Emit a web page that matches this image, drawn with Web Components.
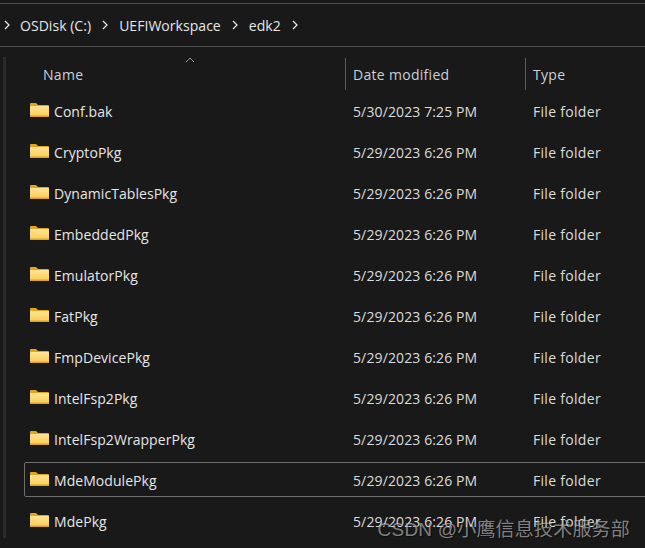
<!DOCTYPE html>
<html>
<head>
<meta charset="utf-8">
<style>
    html, body { margin: 0; height: 100%; overflow: hidden; background: #191919; }
    body { font-family: "Open Sans", "Noto Sans", sans-serif; color: #d6d6d6; }
</style>
</head>
<body>
<explorer-window>
    <path-bar slot="bar">
        <path-crumb>OSDisk (C:)</path-crumb>
        <path-crumb>UEFIWorkspace</path-crumb>
        <path-crumb>edk2</path-crumb>
    </path-bar>
    <list-header slot="header"></list-header>
    <folder-row name="Conf.bak" date="5/30/2023 7:25 PM"></folder-row>
    <folder-row name="CryptoPkg"></folder-row>
    <folder-row name="DynamicTablesPkg"></folder-row>
    <folder-row name="EmbeddedPkg"></folder-row>
    <folder-row name="EmulatorPkg"></folder-row>
    <folder-row name="FatPkg"></folder-row>
    <folder-row name="FmpDevicePkg"></folder-row>
    <folder-row name="IntelFsp2Pkg"></folder-row>
    <folder-row name="IntelFsp2WrapperPkg"></folder-row>
    <folder-row name="MdeModulePkg" focused></folder-row>
    <folder-row name="MdePkg"></folder-row>
</explorer-window>
<water-mark>CSDN @小鹰信息技术服务部</water-mark>

<script>
const chevron = `<svg width="6" height="10" viewBox="0 0 6 10"><path d="M1 1l4 4-4 4" fill="none" stroke="#e4e4e4" stroke-width="1.3"/></svg>`;

class ExplorerWindow extends HTMLElement {
    connectedCallback() {
        this.attachShadow({ mode: 'open' });
        this.shadowRoot.innerHTML = `
            <style>
                :host { display: block; width: 645px; height: 548px; overflow: hidden; padding-top: 3px; box-sizing: border-box; }
                .bar { border-top: 1px solid #4d4d4d; border-bottom: 1px solid #4d4d4d; height: 42px; }
                .body { display: flex; }
                .rail { width: 3px; margin: 10px 0 0 3px; background: #2b2b2b; }
                .list { flex: 1; min-width: 0; margin-left: 18px; display: flex; flex-direction: column; gap: 6px; }
            </style>
            <div class="bar"><slot name="bar"></slot></div>
            <div class="body">
                <div class="rail"></div>
                <div class="list">
                    <slot name="header"></slot>
                    <slot></slot>
                </div>
            </div>
        `;
    }
}

class PathBar extends HTMLElement {
    connectedCallback() {
        this.attachShadow({ mode: 'open' });
        this.shadowRoot.innerHTML = `
            <style>
                :host { display: flex; align-items: center; height: 100%; padding-left: 4px; gap: 10px; font-size: 14px; letter-spacing: .04px; color: #e6e6e6; }
                svg { display: block; }
            </style>
            ${chevron}<slot></slot>
        `;
    }
}

class PathCrumb extends HTMLElement {
    connectedCallback() {
        this.attachShadow({ mode: 'open' });
        this.shadowRoot.innerHTML = `
            <style>
                :host { display: flex; align-items: center; gap: 11px; margin-right: 1px; }
                svg { display: block; }
            </style>
            <slot></slot>${chevron}
        `;
    }
}

class ListHeader extends HTMLElement {
    connectedCallback() {
        this.attachShadow({ mode: 'open' });
        this.shadowRoot.innerHTML = `
            <style>
                :host { display: grid; grid-template-columns: 321px 180px 1fr; height: 32px; margin: 11px 0 -3px; font-size: 14px; letter-spacing: .3px; color: #c8d0d8; position: relative; }
                div { display: flex; align-items: center; padding-left: 7px; }
                .name { padding-left: 19px; border: 0; }
                .col { border-left: 1px solid #5c5c5c; }
                svg { position: absolute; left: 161px; top: -1px; }
            </style>
            <svg width="10" height="6" viewBox="0 0 10 6"><path d="M1 5l4-4 4 4" fill="none" stroke="#9a9a9a"/></svg>
            <div class="name">Name</div>
            <div class="col">Date modified</div>
            <div class="col">Type</div>
        `;
    }
}

class FolderRow extends HTMLElement {
    connectedCallback() {
        const name = this.getAttribute('name');
        const date = this.getAttribute('date') || '5/29/2023 6:26 PM';
        const focused = this.hasAttribute('focused');
        this.attachShadow({ mode: 'open' });
        this.shadowRoot.innerHTML = `
            <style>
                :host { display: grid; grid-template-columns: 321px 180px 1fr; height: 35px; width: 640px; align-items: center; padding-top: 1px; font-size: 14px; color: #dcdcdc; box-sizing: border-box; border: 1px solid ${focused ? '#6e6e6e' : 'transparent'}; border-radius: 2px; }
                .name { display: flex; align-items: center; gap: 5px; padding-left: 5px; color: #e6e6e6; letter-spacing: .06px; }
                .date { padding-left: 7px; letter-spacing: .12px; }
                .type { padding-left: 7px; letter-spacing: .3px; }
                svg { display: block; margin-top: -2px; }
            </style>
            <div class="name">
                <svg width="19" height="15" viewBox="0 0 19 15">
                    <path d="M0 1a1 1 0 0 1 1-1h5l2 2h10a1 1 0 0 1 1 1v3H0z" fill="#e3a51f"/>
                    <rect x="0" y="3" width="19" height="11" rx="1" fill="url(#g)"/>
                    <path d="M0 12.5h19V13a1 1 0 0 1-1 1H1a1 1 0 0 1-1-1z" fill="#dfa124"/>
                    <defs>
                        <linearGradient id="g" x1="0" y1="0" x2="0" y2="1">
                            <stop offset="0" stop-color="#ffe493"/>
                            <stop offset="1" stop-color="#fbcb55"/>
                        </linearGradient>
                    </defs>
                </svg>
                <span>${name}</span>
            </div>
            <div class="date">${date}</div>
            <div class="type">File folder</div>
        `;
    }
}

class WaterMark extends HTMLElement {
    connectedCallback() {
        this.attachShadow({ mode: 'open' });
        this.shadowRoot.innerHTML = `
            <style>
                :host { position: absolute; right: 15px; bottom: 7px; font: 19px "Liberation Sans", "Noto Sans CJK SC", sans-serif; letter-spacing: .2px; color: rgba(200,200,200,.62); text-shadow: 1px 1px 1px rgba(0,0,0,.5); white-space: nowrap; }
            </style>
            <slot></slot>
        `;
    }
}

customElements.define('explorer-window', ExplorerWindow);
customElements.define('path-bar', PathBar);
customElements.define('path-crumb', PathCrumb);
customElements.define('list-header', ListHeader);
customElements.define('folder-row', FolderRow);
customElements.define('water-mark', WaterMark);
</script>
</body>
</html>
